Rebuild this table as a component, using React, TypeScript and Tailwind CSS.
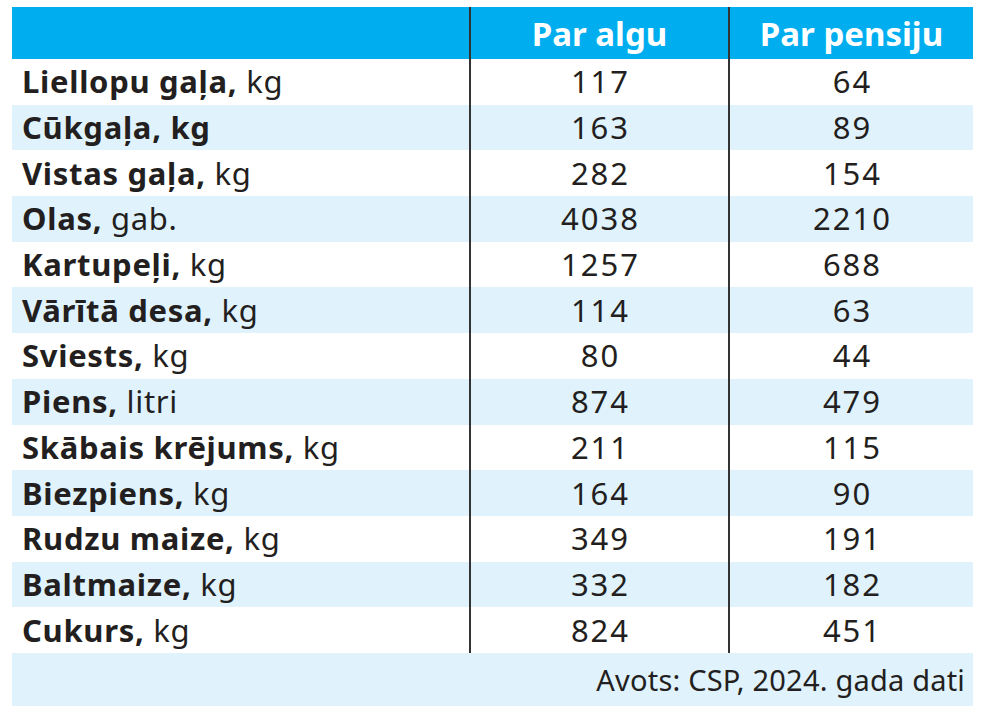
import React from "react";

const rows: { b: string; r: string; a: string; p: string }[] = [
  { b: "Liellopu gaļa,", r: " kg", a: "117", p: "64" },
  { b: "Cūkgaļa, kg", r: "", a: "163", p: "89" },
  { b: "Vistas gaļa,", r: " kg", a: "282", p: "154" },
  { b: "Olas,", r: " gab.", a: "4038", p: "2210" },
  { b: "Kartupeļi,", r: " kg", a: "1257", p: "688" },
  { b: "Vārītā desa,", r: " kg", a: "114", p: "63" },
  { b: "Sviests,", r: " kg", a: "80", p: "44" },
  { b: "Piens,", r: " litri", a: "874", p: "479" },
  { b: "Skābais krējums,", r: " kg", a: "211", p: "115" },
  { b: "Biezpiens,", r: " kg", a: "164", p: "90" },
  { b: "Rudzu maize,", r: " kg", a: "349", p: "191" },
  { b: "Baltmaize,", r: " kg", a: "332", p: "182" },
  { b: "Cukurs,", r: " kg", a: "824", p: "451" },
];

export default function App() {
  return (
    <div
      className="w-[1000px] h-[720px] bg-white pt-[7px] pl-[12px] text-[#231f20]"
      style={{ fontFamily: '"Noto Sans", "Open Sans", sans-serif' }}
    >
      <div className="w-[961px]">
        <div className="grid grid-cols-[457px_259px_245px] h-[52px] bg-[#00aeef] text-white font-bold text-[33px] leading-none">
          <div />
          <div className="border-l-2 border-[#333] flex items-center justify-center">Par algu</div>
          <div className="border-l-2 border-[#333] flex items-center justify-center">Par pensiju</div>
        </div>
        {rows.map((row, i) => (
          <div
            key={i}
            className={
              "grid grid-cols-[457px_259px_245px] h-[45.7px] text-[31px] leading-none " +
              (i % 2 === 1 ? "bg-[#e0f2fc]" : "bg-white")
            }
          >
            <div className="flex items-center pl-[10px] whitespace-pre tracking-[0.7px]">
              <span className="font-bold">{row.b}</span>
              <span>{row.r}</span>
            </div>
            <div className="border-l-2 border-[#333] flex items-center justify-center tracking-[2px] pl-[2px]">{row.a}</div>
            <div className="border-l-2 border-[#333] flex items-center justify-center tracking-[2px] pl-[2px]">{row.p}</div>
          </div>
        ))}
        <div className="h-[53px] bg-[#e0f2fc] flex items-center justify-end pr-[8px] text-[29px] leading-none tracking-[0.2px]">
          Avots: CSP, 2024. gada dati
        </div>
      </div>
    </div>
  );
}
